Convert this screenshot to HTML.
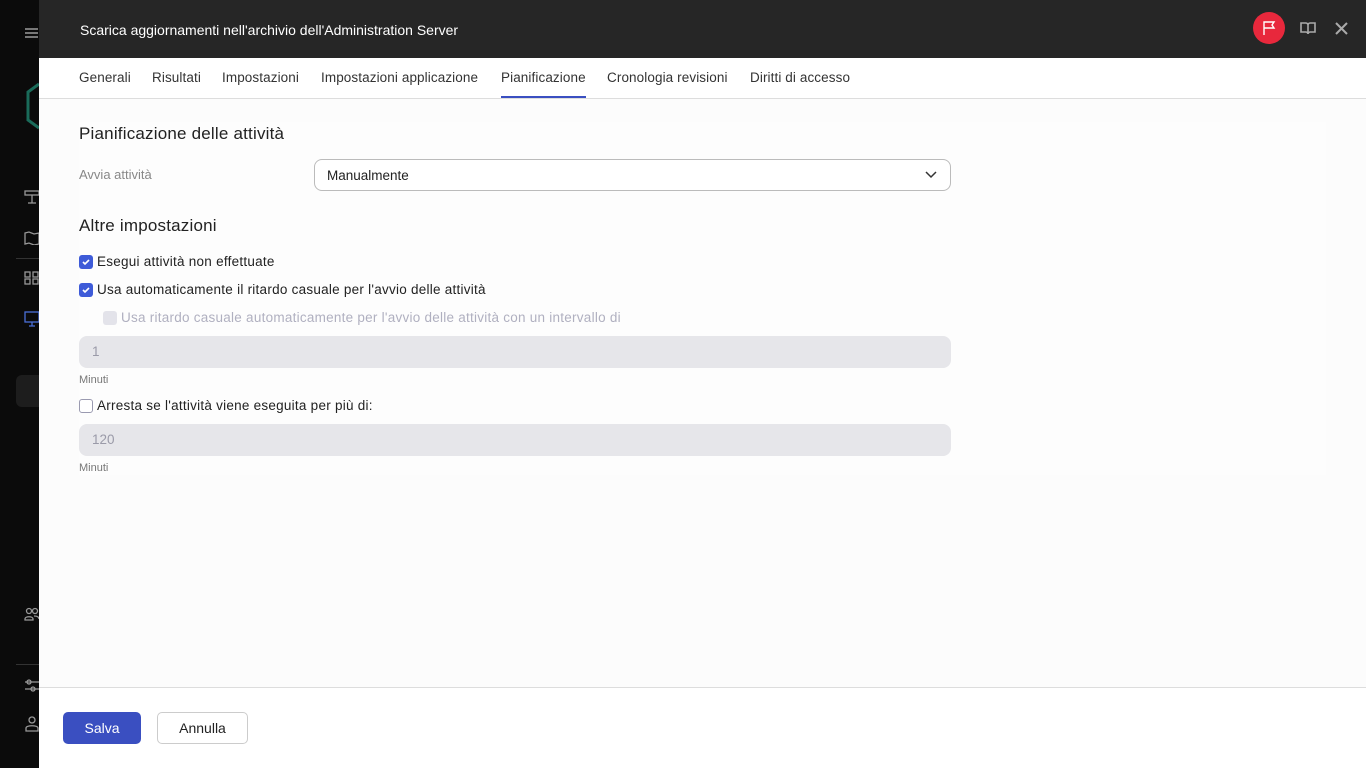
<!DOCTYPE html>
<html><head><meta charset="utf-8"><style>
*{box-sizing:border-box;margin:0;padding:0}
body{width:1366px;height:768px;overflow:hidden;background:#0b0b0b;font-family:"Liberation Sans",sans-serif;position:relative}
.side{position:absolute;left:0;top:0;width:39px;height:768px;background:#0b0b0b}
.main{position:absolute;left:39px;top:0;width:1327px;height:768px;background:#fcfcfc}
.hdr{height:58px;background:#262626;color:#fff;font-size:14px;padding:22px 0 0 41px}
.tabs{height:41px;background:#fff;border-bottom:1px solid #ddd;position:relative;font-size:13.5px;color:#333;letter-spacing:0.1px}
.tabs span{position:absolute;top:12px}
.ul{position:absolute;left:462px;top:38px;width:85px;height:2px;background:#3a4fc1}
.t{position:absolute;color:#222}
.h{font-size:17px;color:#222;letter-spacing:0.2px}
.lab{font-size:13px;color:#888}
.cl{font-size:13.5px;letter-spacing:0.25px}
.cb{position:absolute;width:14px;height:14px;border-radius:3px;background:#3e5bd8}
.cb svg{position:absolute;left:2px;top:2px}
.inp{position:absolute;left:40px;width:872px;height:32px;border-radius:8px;background:#e6e6ea;color:#9a9aa8;font-size:13.5px;padding:8px 13px}
.small{font-size:11px;color:#777}
.ic{position:absolute;left:24px;stroke:#999;fill:none;stroke-width:1.3}
</style></head><body>
<div class="side">
<div style="position:absolute;left:25px;top:28px;width:13px;height:1.5px;background:#777;box-shadow:0 4px 0 #777,0 8px 0 #777"></div>
<svg style="position:absolute;left:26px;top:82px" width="14" height="48"><path d="M13 2 L2 10 L2 38 L13 46" stroke="#1a6b5a" stroke-width="3" fill="none"/></svg>
<svg class="ic" style="top:190px" width="16" height="14"><rect x="1" y="1" width="14" height="4"/><path d="M8 5v8M4 13h8"/></svg>
<svg class="ic" style="top:231px" width="16" height="14"><path d="M1 2l4-1 5 2 5-1v11l-5 1-5-2-4 1z"/></svg>
<div style="position:absolute;left:16px;top:258px;width:23px;height:1px;background:#333"></div>
<svg class="ic" style="top:271px" width="16" height="14"><rect x="1" y="1" width="5" height="5"/><rect x="9" y="1" width="5" height="5"/><rect x="1" y="8" width="5" height="5"/><rect x="9" y="8" width="5" height="5"/></svg>
<svg class="ic" style="top:311px;stroke:#4a6fd8" width="16" height="16"><rect x="1" y="1" width="14" height="10"/><path d="M5 15h6M8 11v4"/></svg>
<div style="position:absolute;left:16px;top:375px;width:23px;height:32px;border-radius:6px 0 0 6px;background:#1d1d1d"></div>
<svg class="ic" style="top:607px" width="16" height="16"><circle cx="5" cy="4" r="2.5"/><circle cx="11" cy="4" r="2.5"/><path d="M1 12c0-3 8-3 8 0v1H1zM10 9c3 0 5 1 5 3"/></svg>
<div style="position:absolute;left:16px;top:664px;width:23px;height:1px;background:#333"></div>
<svg class="ic" style="top:678px" width="16" height="16"><path d="M1 4h16M1 11h16"/><circle cx="5" cy="4" r="2"/><circle cx="9" cy="11" r="2"/></svg>
<svg class="ic" style="top:716px" width="16" height="16"><circle cx="8" cy="4" r="3"/><path d="M2 15v-3c0-3 12-3 12 0v3z"/></svg>
</div>
<div class="main">
<div class="hdr">Scarica aggiornamenti nell'archivio dell'Administration Server</div>
<div style="position:absolute;left:1214px;top:12px;width:32px;height:32px;border-radius:50%;background:#e8283c"></div>
<svg style="position:absolute;left:1223px;top:20px" width="14" height="16"><path d="M2 15V2h10l-2 3 2 3H2" stroke="#fff" stroke-width="1.4" fill="none"/></svg>
<svg style="position:absolute;left:1261px;top:22px" width="16" height="13"><path d="M1 1h5c1 0 2 1 2 2v9c0-1-1-2-2-2H1zM15 1h-5c-1 0-2 1-2 2v9c0-1 1-2 2-2h5z" stroke="#aaa" stroke-width="1.6" fill="none"/></svg>
<svg style="position:absolute;left:1296px;top:22px" width="13" height="13"><path d="M1 1l11 11M12 1L1 12" stroke="#aaa" stroke-width="2"/></svg>
<div class="tabs">
<span style="left:40px">Generali</span><span style="left:113px">Risultati</span><span style="left:183px">Impostazioni</span><span style="left:282px">Impostazioni applicazione</span><span style="left:462px">Pianificazione</span><span style="left:568px">Cronologia revisioni</span><span style="left:711px">Diritti di accesso</span>
<div class="ul"></div></div>
<div style="position:absolute;left:40px;top:122px;width:1247px;height:353px;background:#fdfdfd"></div>
<div class="t h" style="left:40px;top:124px">Pianificazione delle attività</div>
<div class="t lab" style="left:40px;top:167px">Avvia attività</div>
<div style="position:absolute;left:275px;top:159px;width:637px;height:32px;border:1px solid #bbb;border-radius:8px;background:#fff;font-size:13.5px;color:#222;padding:8px 12px">Manualmente
<svg style="position:absolute;right:13px;top:11px" width="12" height="8"><path d="M1 1l5 5 5-5" stroke="#333" stroke-width="1.5" fill="none"/></svg></div>
<div class="t h" style="left:40px;top:216px">Altre impostazioni</div>
<div class="cb" style="left:40px;top:255px"><svg width="10" height="10"><path d="M2 5l2 2 4-4" stroke="#fff" stroke-width="1.6" fill="none"/></svg></div>
<div class="t cl" style="left:58px;top:254px">Esegui attività non effettuate</div>
<div class="cb" style="left:40px;top:283px"><svg width="10" height="10"><path d="M2 5l2 2 4-4" stroke="#fff" stroke-width="1.6" fill="none"/></svg></div>
<div class="t cl" style="left:58px;top:282px">Usa automaticamente il ritardo casuale per l'avvio delle attività</div>
<div class="cb" style="left:64px;top:311px;background:#e3e3ea"></div>
<div class="t cl" style="left:82px;top:310px;color:#b0b0c0">Usa ritardo casuale automaticamente per l'avvio delle attività con un intervallo di</div>
<div class="inp" style="top:336px">1</div>
<div class="t small" style="left:40px;top:374px">Minuti</div>
<div class="cb" style="left:40px;top:399px;background:#fff;border:1px solid #9a9ab0"></div>
<div class="t cl" style="left:58px;top:398px">Arresta se l'attività viene eseguita per più di:</div>
<div class="inp" style="top:424px">120</div>
<div class="t small" style="left:40px;top:462px">Minuti</div>
<div style="position:absolute;left:0;top:687px;width:1327px;height:81px;background:#fff;border-top:1px solid #ddd"></div>
<div style="position:absolute;left:24px;top:712px;width:78px;height:32px;border-radius:5px;background:#3a4fc1;color:#fff;font-size:14px;text-align:center;line-height:32px">Salva</div>
<div style="position:absolute;left:118px;top:712px;width:91px;height:32px;border-radius:5px;border:1px solid #ccc;background:#fff;color:#222;font-size:14px;text-align:center;line-height:30px">Annulla</div>
</div>
</body></html>
